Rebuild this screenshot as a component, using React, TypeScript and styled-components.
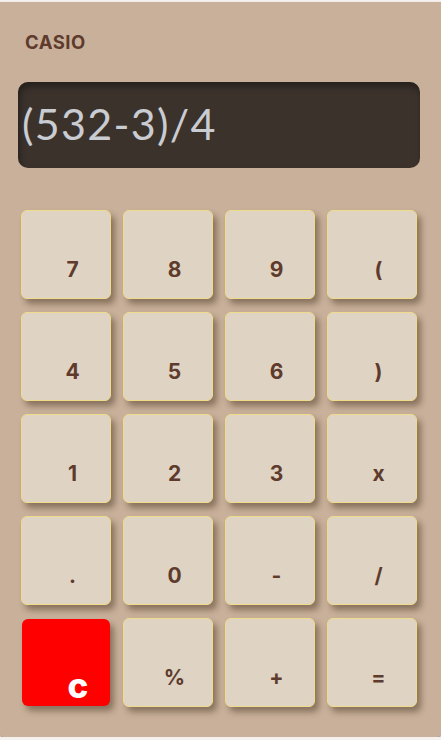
import React from "react";
import styled, { createGlobalStyle } from "styled-components";

const Global = createGlobalStyle`
  html, body { margin: 0; padding: 0; background: #f4f1ee; }
  * { box-sizing: border-box; }
`;

const Shell = styled.div`
  margin-top: 2px;
  width: 441px;
  height: 735px;
  background: #c8b09a;
  border-radius: 0 0 4px 4px;
  box-shadow: 0 1px 2px rgba(0, 0, 0, 0.45);
  padding: 28px 0 0 0;
  display: flex;
  flex-direction: column;
`;

const Brand = styled.div`
  font-family: Inter, "Noto Sans", sans-serif;
  font-weight: 700;
  font-size: 18.5px;
  letter-spacing: 0.5px;
  color: #5e3b2c;
  padding-left: 25px;
  line-height: 24px;
`;

const Screen = styled.div`
  margin: 28px 21px 0 18px;
  height: 86px;
  border-radius: 10px;
  background: #3b322c;
  box-shadow: inset 2px 5px 6px rgba(0, 0, 0, 0.35);
  display: flex;
  align-items: center;
  padding: 0 0 3px 4px;
  font-family: Lato, "Noto Sans", sans-serif;
  font-weight: 400;
  font-size: 43px;
  letter-spacing: 1.3px;
  color: #c9ccd1;
`;

const Pad = styled.div`
  margin: 42px 0 0 21px;
  display: grid;
  grid-template-columns: repeat(4, 90px);
  grid-auto-rows: 89px;
  column-gap: 12px;
  row-gap: 13px;
`;

const Key = styled.button<{ $danger?: boolean }>`
  all: unset;
  display: flex;
  align-items: center;
  justify-content: center;
  border-radius: 6px;
  cursor: pointer;
  font-family: Inter, "Noto Sans", sans-serif;
  background: ${(p) => (p.$danger ? "#ff0000" : "#dfd3c4")};
  border: ${(p) => (p.$danger ? "none" : "1px solid #eedc8a")};
  margin: ${(p) => (p.$danger ? "1px" : "0")};
  color: ${(p) => (p.$danger ? "#ffffff" : "#5e3b2c")};
  font-weight: ${(p) => (p.$danger ? 800 : 700)};
  font-size: ${(p) => (p.$danger ? "35px" : "21px")};
  padding: ${(p) => (p.$danger ? "44px 0 0 24px" : "30px 0 0 13px")};
  box-shadow: 4px 5px 6px rgba(60, 40, 20, 0.45);
`;

const keys = ["7", "8", "9", "(", "4", "5", "6", ")", "1", "2", "3", "x", ".", "0", "-", "/", "c", "%", "+", "="];

export default function App() {
  return (
    <>
      <Global />
      <Shell>
        <Brand>CASIO</Brand>
        <Screen>(532-3)/4</Screen>
        <Pad>
          {keys.map((k) => (
            <Key key={k} $danger={k === "c"}>
              {k}
            </Key>
          ))}
        </Pad>
      </Shell>
    </>
  );
}
